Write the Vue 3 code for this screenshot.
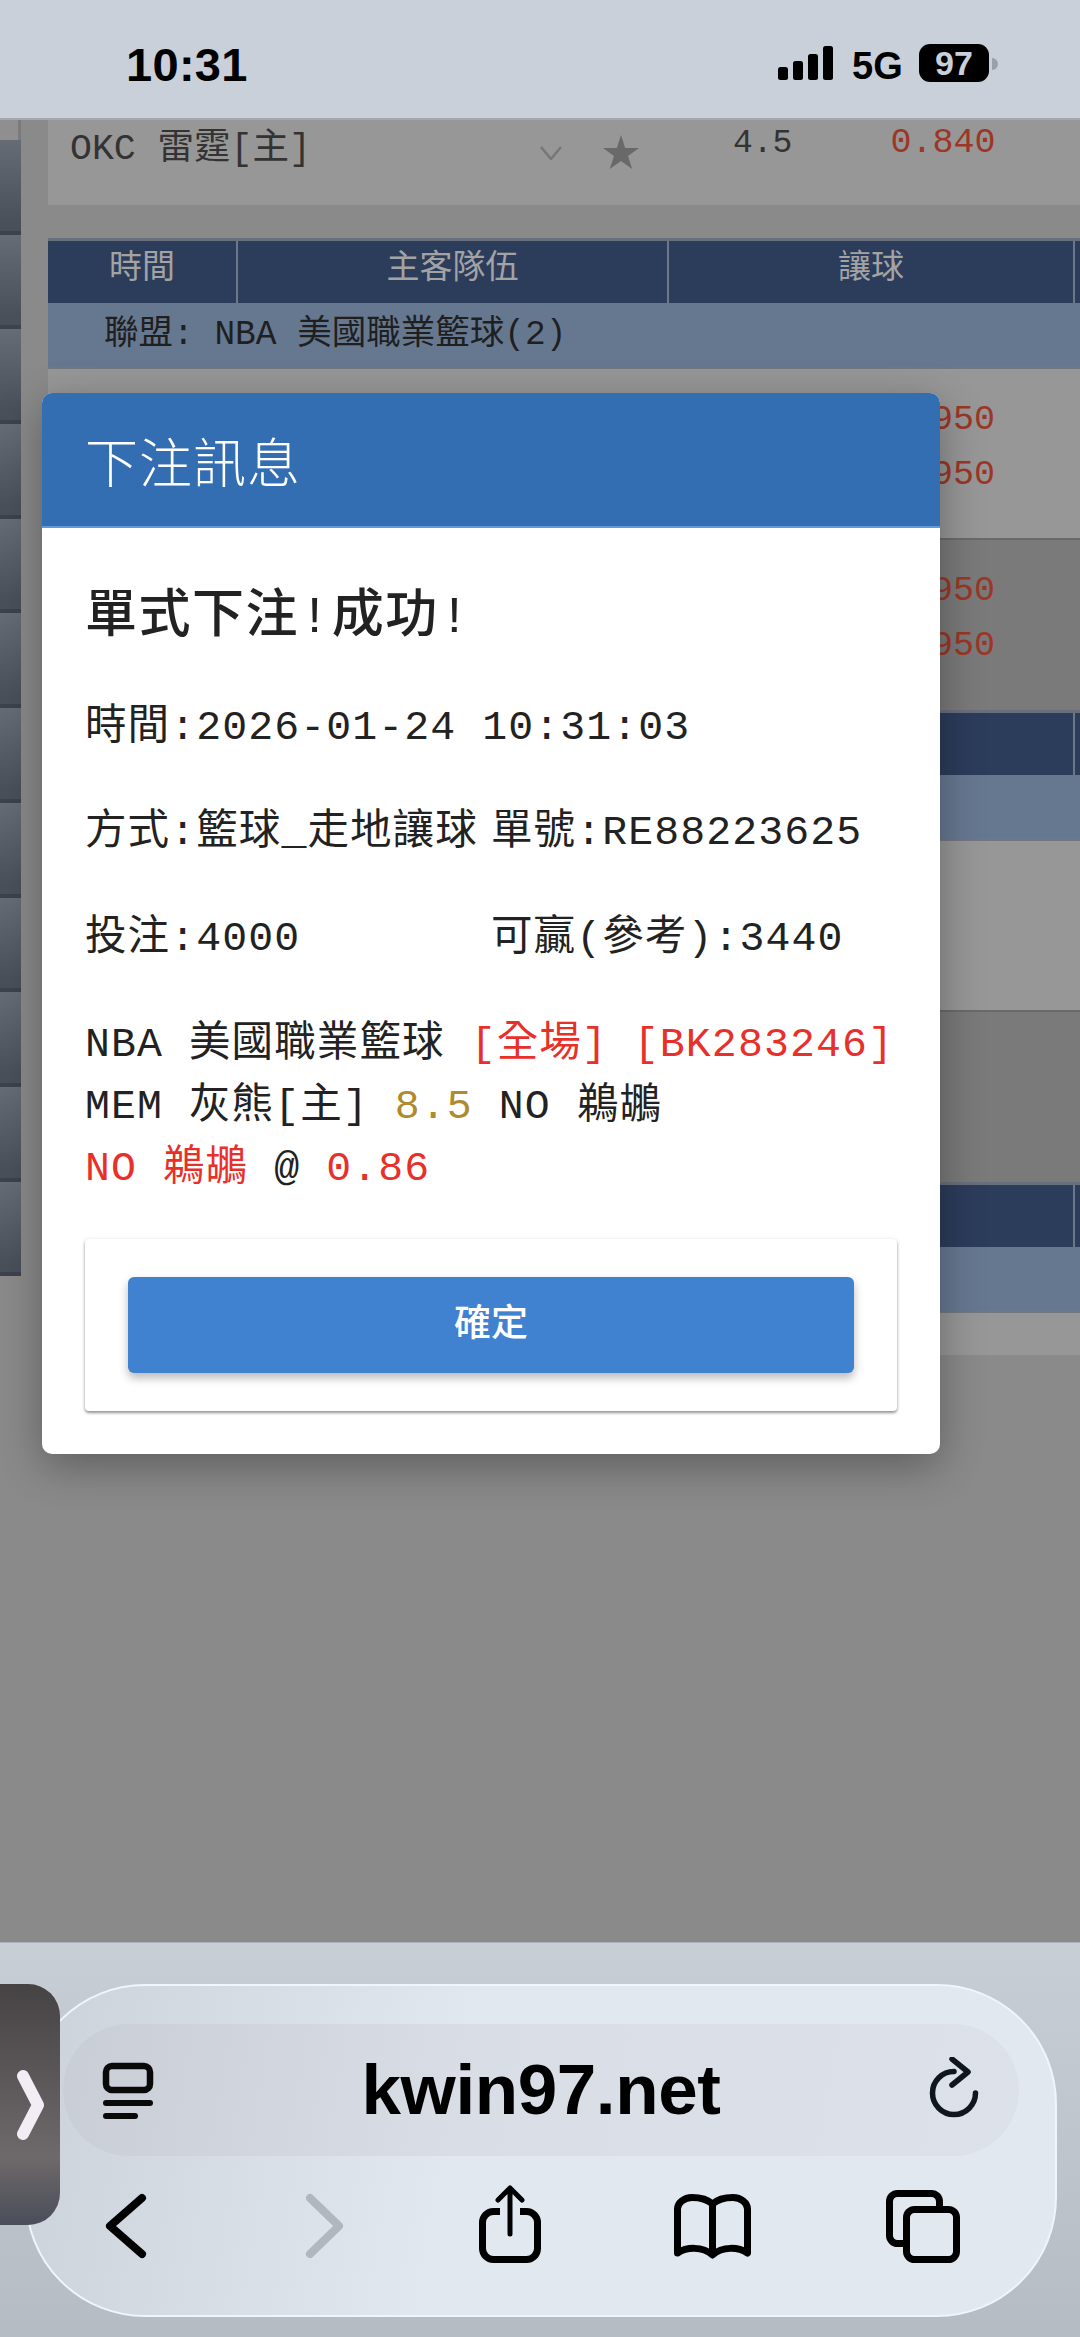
<template>
  <div class="phone">
    <header class="status">
      <span class="clock">10:31</span>
      <div class="status-right">
        <div class="signal"><i class="b1"></i><i class="b2"></i><i class="b3"></i><i class="b4"></i></div>
        <span class="net">5G</span>
        <span class="batt">97</span>
        <span class="nub"></span>
      </div>
    </header>

    <main class="page">
      <aside class="side">
        <div class="side-top"></div>
        <div v-for="n in 12" :key="n" class="side-btn"></div>
      </aside>
      <div class="content">
        <div class="top-card">
          <span class="t-name">OKC 雷霆[主]</span>
          <svg class="t-chev" width="22" height="14" viewBox="0 0 22 14"><path d="M1 1l10 12L21 1" fill="none" stroke="#777" stroke-width="2.5"/></svg>
          <svg class="t-star" width="36" height="34" viewBox="0 0 36 34"><path d="M18 0l4.200 12.900H36l-11 8 4.200 13.100L18 25.900 6.800 34 11 20.900l-11-8h13.800z" fill="#696969"/></svg>
          <span class="t-line">4.5</span>
          <span class="t-odds">0.840</span>
        </div>
        <section v-for="(s, i) in sections" :key="i" class="sec">
          <div class="thead">
            <span class="c1">時間</span><span class="c2">主客隊伍</span><span class="c3">讓球</span><span class="c4"></span>
          </div>
          <div class="league">{{ s.league }}</div>
          <div v-if="s.rows" class="row light"><span v-for="o in s.rows" :key="o + 'a'">{{ o }}</span><span>{{ s.rows[0] }}</span></div>
          <div v-if="s.rows" class="row dark"><span v-for="o in s.rows" :key="o + 'b'">{{ o }}</span><span>{{ s.rows[0] }}</span></div>
          <div v-if="s.empty" class="row light"></div>
          <div v-if="s.empty" class="row dark"></div>
        </section>
        <div class="band"></div>
      </div>

      <div class="modal">
        <div class="modal-head">下注訊息</div>
        <div class="modal-body">
          <h3>單式下注!成功!</h3>
          <p class="ln ln-time">時間:2026-01-24 10:31:03</p>
          <div class="cols ln-way"><span>方式:籃球_走地讓球</span><span>單號:RE88223625</span></div>
          <div class="cols ln-bet"><span>投注:4000</span><span>可贏(參考):3440</span></div>
          <div class="msg">
            <div>NBA 美國職業籃球 <em>[全場]</em> <em>[BK283246]</em></div>
            <div>MEM 灰熊[主] <b>8.5</b> NO 鵜鶘</div>
            <div><em>NO 鵜鶘</em> @ <em>0.86</em></div>
          </div>
          <div class="btn-card"><button class="ok">確定</button></div>
        </div>
      </div>
    </main>

    <footer class="chrome">
      <div class="side-tab">
        <svg width="30" height="72" viewBox="0 0 30 72"><path d="M8 7l15 29L8 65" fill="none" stroke="#f1edf5" stroke-width="12" stroke-linecap="round" stroke-linejoin="round"/></svg>
      </div>
      <div class="pill">
        <div class="url">
          <svg class="reader" width="52" height="58" viewBox="0 0 52 58" fill="none" stroke="#0a0a0a" stroke-linecap="round">
            <rect x="4" y="5" width="44" height="24" rx="6" stroke-width="6.500"/>
            <path d="M4 42h44" stroke-width="6"/><path d="M4 55h29" stroke-width="6"/>
          </svg>
          <span class="host">kwin97.net</span>
          <svg class="reload" width="56" height="62" viewBox="0 0 56 62" fill="none" stroke="#10161d" stroke-width="5.500" stroke-linecap="round" stroke-linejoin="round">
            <path d="M28 14.500A21.500 21.500 0 1 0 49.500 36"/>
            <path d="M26 2l16 13-16 13"/>
          </svg>
        </div>
        <div class="tools">
          <svg class="t-back" width="48" height="82" viewBox="0 0 48 82"><path d="M40 13L8 41l32 28" fill="none" stroke="#000" stroke-width="8" stroke-linecap="round" stroke-linejoin="round"/></svg>
          <svg class="t-fwd" width="48" height="82" viewBox="0 0 48 82"><path d="M8 13l29 28L8 69" fill="none" stroke="#b1b7bf" stroke-width="8" stroke-linecap="round" stroke-linejoin="round"/></svg>
          <svg width="70" height="82" viewBox="0 4 70 82" fill="none" stroke="#000" stroke-linecap="round" stroke-linejoin="round">
            <path d="M25 30.500h-6.500a11 11 0 0 0-11 11v26a11 11 0 0 0 11 11h33a11 11 0 0 0 11-11v-26a11 11 0 0 0-11-11H45" stroke-width="7" stroke-linecap="butt"/>
            <path d="M35 7v46M23 19L35 7l12 12" stroke-width="5"/>
          </svg>
          <svg width="86" height="82" viewBox="0 -5 86 82" fill="none" stroke="#000" stroke-width="7" stroke-linejoin="round">
            <path d="M42.500 14C36 8 28 7.500 22 7.500 14 7.500 7.500 13 7.500 19v44c9-6 25-7 35 2 10-9 26-8 35-2V19c0-6-6.500-11.500-14.500-11.500-6 0-14 .5-20.500 6.500zM42.500 14v51"/>
          </svg>
          <svg width="84" height="82" viewBox="0 0 84 82" fill="none" stroke="#000" stroke-width="7">
            <path d="M58.500 21v-4.500a8 8 0 0 0-8-8h-34a8 8 0 0 0-8 8v34a8 8 0 0 0 8 8H22"/>
            <rect x="25.500" y="24.500" width="50" height="50" rx="8"/>
          </svg>
        </div>
      </div>
    </footer>
  </div>
</template>

<script setup>
const sections = [
  { league: '聯盟: NBA 美國職業籃球(2)', rows: ['0.950'] },
  { league: '聯盟: NBA 美國職業籃球(2)', empty: true },
  { league: '聯盟: NBA 美國職業籃球(2)' }
]
</script>

<style>
html, body { margin: 0; background: #8a8a8a; }
</style>

<style scoped>
.phone { width: 1080px; height: 2337px; display: flex; flex-direction: column; overflow: hidden; font-family: "Liberation Mono", "Noto Sans CJK TC", monospace; }

/* status bar */
.status { height: 118px; flex: none; background: #c9d0d9; border-bottom: 2px solid #a4a8ad; display: flex; justify-content: space-between; font-family: "Liberation Sans", sans-serif; font-weight: bold; color: #000; position: relative; z-index: 2; }
.clock { font-size: 47px; line-height: 46px; margin: 42px 0 0 126px; letter-spacing: .3px; }
.status-right { display: flex; align-items: flex-start; margin-right: 82px; }
.signal { display: flex; gap: 5px; align-items: flex-end; height: 34px; margin-top: 46px; }
.signal i { width: 10px; background: #000; border-radius: 2.5px; display: block; }
.b1 { height: 13px; } .b2 { height: 19px; } .b3 { height: 26px; } .b4 { height: 34px; }
.net { font-size: 38px; line-height: 38px; margin: 47px 0 0 19px; width: 67px; }
.batt { width: 70px; height: 38px; margin-top: 44px; background: #000; color: #c9d0d9; border-radius: 11px; font-size: 34px; line-height: 38px; text-align: center; }
.nub { width: 6px; height: 12px; margin: 58px 0 0 3px; background: #9a9fa8; border-radius: 0 6px 6px 0; }

/* blurred page behind dialog */
.page { flex: 1; position: relative; display: flex; background: #8a8a8a; overflow: hidden; color: #222; }
.side { width: 21px; flex: none; margin-right: 27px; }
.side-top { height: 20px; width: 18px; background: #8f8f8f; border-right: 3px solid #7a7a7a; box-sizing: content-box; }
.side-btn { height: 94.700px; box-sizing: border-box; background: linear-gradient(#666c76, #4a505a 90%); border-bottom: 4px solid #3d424e; }
.content { flex: 1; min-width: 0; }
.top-card { height: 85px; background: #979797; position: relative; display: flex; align-items: flex-start; }
.t-name { font-size: 36.500px; line-height: 40px; margin: 10px 0 0 22px; color: #333; width: 470px; white-space: pre; }
.t-chev { margin-top: 26px; }
.t-star { margin: 15px 0 0 41px; }
.t-line { font-size: 33px; line-height: 36px; margin: 6px 0 0 94px; color: #333; }
.t-odds { font-size: 35px; line-height: 36px; margin: 5px 0 0 98px; color: #9c3626; }
.sec:first-of-type { margin-top: 33px; }
.thead { height: 65px; box-sizing: border-box; background: #2c3c5b; border-top: 3px solid #6a6f7d; display: flex; color: #a3a3a3; font-size: 33px; line-height: 58px; text-align: center; }
.thead span { border-right: 2px solid #6f7685; box-sizing: border-box; height: 62px; }
.c1 { width: 190px; } .c2 { width: 431px; } .c3 { width: 406px; } .c4 { flex: 1; border-right: 0 !important; }
.league { height: 66px; box-sizing: border-box; background: #667890; border-bottom: 2px solid #737880; padding-left: 56px; font-size: 34.500px; line-height: 63px; color: #1f1f1f; }
.row { height: 169px; box-sizing: border-box; padding: 24px 85px 0 0; display: flex; flex-direction: column; align-items: flex-end; color: #9c3626; font-size: 35px; line-height: 55px; }
.light { background: #979797; }
.dark { background: #7a7a7a; border-top: 2px solid #6a6a6a; height: 172px; }
.band { height: 42px; background: #979797; }

/* dialog */
.modal { position: absolute; left: 42px; top: 273px; width: 898px; height: 1061px; background: #fff; border-radius: 10px; box-shadow: 0 12px 44px rgba(0, 0, 0, .32); overflow: hidden; }
.modal-head { height: 135px; box-sizing: border-box; background: #336eb3; border-bottom: 2px solid #5f9bdc; color: #fff; font-family: "Noto Sans CJK TC", sans-serif; font-size: 53px; font-weight: 300; line-height: 134px; padding-left: 43px; letter-spacing: 1px; }
.modal-body { padding: 0 43px; color: #222; font-size: 41.500px; letter-spacing: 1.100px; white-space: pre; }
.modal-body h3 { margin: 61px 0 0; font-size: 52px; line-height: 60px; font-weight: 500; letter-spacing: 1.500px; }
.ln { margin: 0; line-height: 60px; }
.ln-time { margin-top: 49px; }
.cols { display: grid; grid-template-columns: 406px 1fr; line-height: 60px; }
.ln-way { margin-top: 45px; }
.ln-bet { margin-top: 46px; }
.msg { margin-top: 45px; line-height: 62px; }
.msg em { font-style: normal; color: #e8302a; }
.msg b { font-weight: normal; color: #b08a2e; }
.btn-card { margin: 39px 0 0; width: 812px; height: 172px; box-sizing: border-box; padding: 38px 43px 0; background: #fff; border-radius: 4px; box-shadow: 0 2px 3px rgba(0, 0, 0, .4), 0 0 4px rgba(0, 0, 0, .08); }
.ok { display: block; width: 100%; height: 96px; border: 0; border-radius: 6px; background: #4081d0; box-shadow: 0 5px 10px rgba(0, 0, 0, .28); color: #fff; font-family: "Noto Sans CJK TC", sans-serif; font-size: 37px; font-weight: 500; line-height: 86px; padding: 0 0 10px; }

/* safari toolbar */
.chrome { height: 395px; flex: none; box-sizing: border-box; padding: 41px 23px 0 25px; background: linear-gradient(#c8ced6, #b6bcc4); border-top: 1px solid #aeb3ba; position: relative; }
.pill { height: 333px; box-sizing: border-box; border: 2px solid #f1f4f8; border-radius: 120px; background: linear-gradient(100deg, #cbd2da, #e2e8f0 42%); }
.url { height: 132px; margin: 38px 36px 0; border-radius: 66px; background: linear-gradient(100deg, #c9ced6, #d9dee6 42%, #dde2ea); display: grid; grid-template-columns: 1fr auto 1fr; align-items: center; }
.reader { margin-left: 39px; }
.reload { justify-self: end; margin-right: 37px; margin-bottom: 4px; }
.host { font-family: "Liberation Sans", sans-serif; font-weight: bold; font-size: 71px; line-height: 70px; letter-spacing: -.4px; color: #000; }
.tools { display: flex; gap: 125px; margin: 29px 0 0 75px; }
.t-back { margin-right: 27px; }
.side-tab { position: absolute; left: 0; top: 41px; width: 60px; height: 241px; border-radius: 0 32px 32px 0; background: linear-gradient(#464344, #6e696a 72%, #4a4d5a); display: flex; align-items: center; padding-left: 15px; box-sizing: border-box; }
</style>
